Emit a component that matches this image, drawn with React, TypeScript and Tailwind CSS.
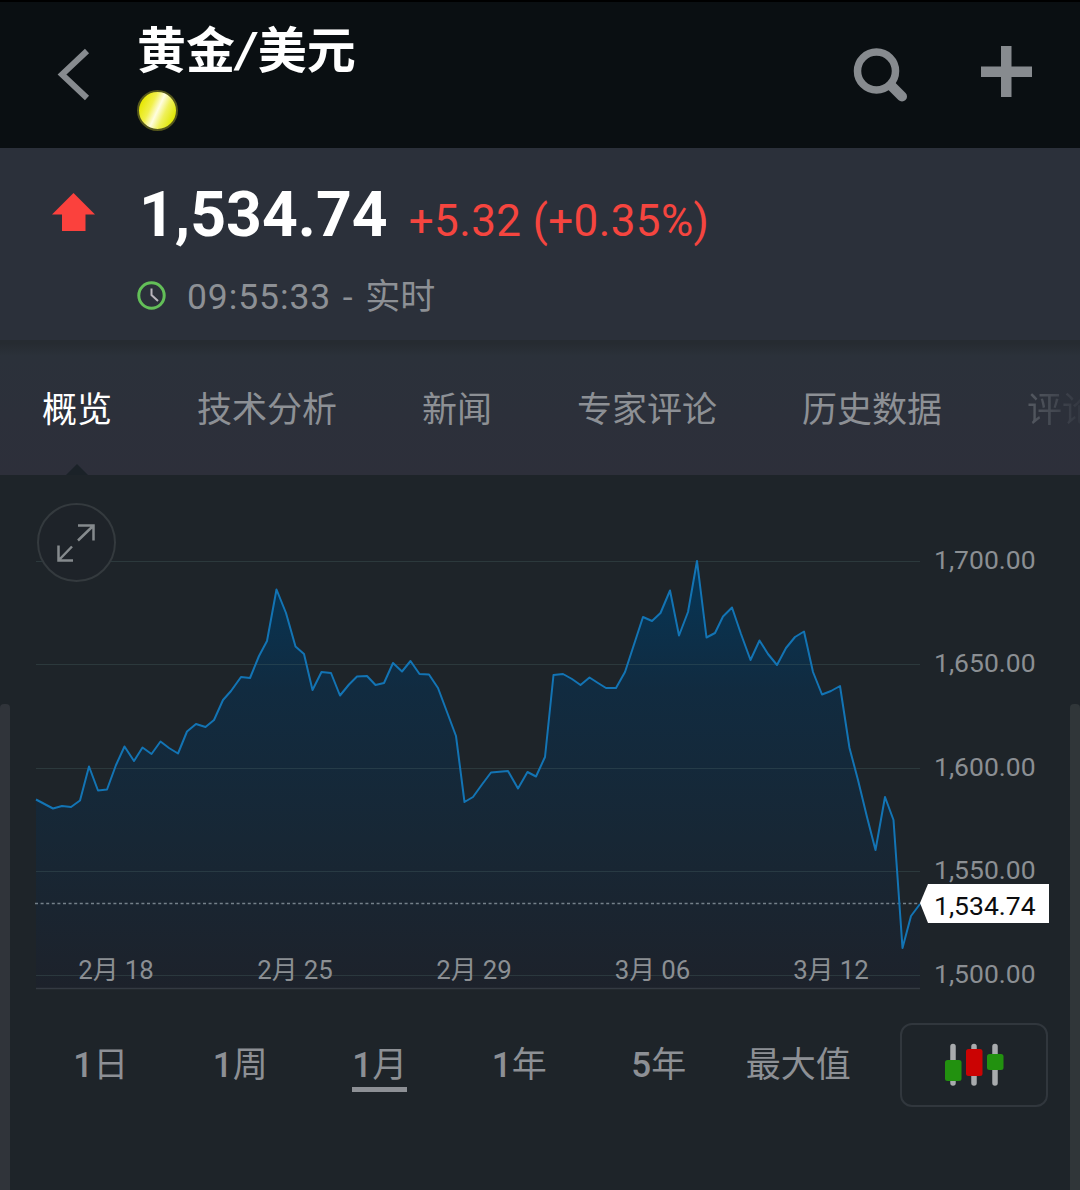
import clsx from "clsx";

const TABS = ["概览", "技术分析", "新闻", "专家评论", "历史数据"];

const PERIODS = [
    { count: "1", unit: "日" },
    { count: "1", unit: "周" },
    { count: "1", unit: "月" },
    { count: "1", unit: "年" },
    { count: "5", unit: "年" },
    { count: "", unit: "最大值" },
];

const PRICE_LEVELS = [
    { label: "1,700.00", y: 86 },
    { label: "1,650.00", y: 189 },
    { label: "1,600.00", y: 293 },
    { label: "1,550.00", y: 396 },
    { label: "1,500.00", y: 500 },
];

const DATES = [
    { label: "2月 18", x: 116 },
    { label: "2月 25", x: 295 },
    { label: "2月 29", x: 474 },
    { label: "3月 06", x: 652.5 },
    { label: "3月 12", x: 831 },
];

const POINTS: [number, number][] = [
    [36, 324.5], [53, 333.5], [62, 331], [71, 332], [80, 325.5], [89, 291.5], [98, 315.5], [107, 314.5],
    [116, 290], [124.5, 271.5], [134, 286], [142.5, 272.5], [151.5, 279], [160.5, 266.5], [169, 273],
    [178, 278.5], [187, 256.5], [196, 249], [205.5, 252], [214, 245], [223, 225], [231, 216], [241, 202],
    [250, 203], [259, 181], [267, 166], [276.5, 114.5], [286, 138], [295.5, 171.5], [304, 179],
    [312.5, 215], [321.5, 197], [331, 198], [340, 220.5], [349, 209.5], [357, 201.5], [367, 201],
    [375.5, 210], [384, 208], [393, 188], [402, 196.5], [410.5, 186], [419.5, 199], [429, 199.5],
    [438, 213], [447, 237], [456, 261], [464.5, 327], [473, 322], [482, 309.5], [491, 297.5], [508, 296],
    [518, 313.5], [527.5, 297], [536, 301.5], [545, 282], [553.5, 200], [563, 199], [572, 204],
    [580.5, 210], [589.5, 202.5], [598, 208], [606, 213], [616, 213], [625, 197], [643, 142],
    [652, 146], [660.5, 138], [670, 115.5], [679, 160.5], [688, 137], [697, 86], [706.5, 162.5],
    [715, 158], [723, 141.5], [732, 132.5], [741, 159], [750.5, 185], [759.5, 165.5], [768, 179],
    [777, 190], [786, 173], [795, 162], [804, 156.5], [813, 197], [822, 219.5], [831, 216], [840, 211],
    [849.5, 273], [858, 305], [867, 342], [875.5, 375], [885, 322], [893.5, 345], [902.5, 473],
    [911, 441], [920, 429],
];

const LINE = POINTS.map(([x, y]) => `${x},${y}`).join(" ");

function Header() {
    return (
        <header className="flex h-[148px] shrink-0 items-start border-t-2 border-black bg-[#0a0f12] text-[#878b8f]">
            <svg className="ml-[57px] mt-[45px] shrink-0" width="34" height="56" viewBox="0 0 34 56" fill="none">
                <path d="M30 4 L5 27.5 L30 51" stroke="currentColor" strokeWidth="6" />
            </svg>
            <div className="ml-[46px] mt-[20px] flex-1">
                <h1 className="text-[49px] leading-[60px] font-bold whitespace-nowrap text-white">
                    黄金<span className="mr-[3px] ml-[2px] italic">/</span>美元
                </h1>
                <div className="mt-[8px] size-[41px] rounded-full border-2 border-[#55571c] bg-[linear-gradient(115deg,#e6e600_12%,#f1f04a_34%,#fffde0_50%,#eff05a_66%,#dfe600_88%)]" />
            </div>
            <svg className="mr-[71px] mt-[44px]" width="56" height="58" viewBox="0 0 56 58" fill="none" stroke="currentColor">
                <circle cx="23.5" cy="25" r="19" strokeWidth="7.5" />
                <path d="M39 40.5 L49 50.5" strokeWidth="10" strokeLinecap="round" />
            </svg>
            <svg className="mr-[48px] mt-[44px]" width="52" height="52" viewBox="0 0 52 52">
                <path d="M21 0h10.500v20.500H52v10.500H31.500V51H21V31H1V20.500h20z" fill="currentColor" />
            </svg>
        </header>
    );
}

function Quote() {
    return (
        <section className="flex h-[192px] shrink-0 bg-[#2b303a]">
            <svg className="ml-[52px] mt-[45px] shrink-0" width="43" height="39" viewBox="0 0 43 39">
                <path d="M21.500 0 L43 21.500 H33.500 V38 H10 V21.500 H0z" fill="#fb413d" />
            </svg>
            <div className="ml-[42px] mt-[29px]">
                <div className="flex items-baseline leading-[76px] whitespace-nowrap">
                    <span className="ml-[2px] text-[62.500px] font-bold text-white">1,534.74</span>
                    <span className="ml-[21px] text-[44px] tracking-[0.4px] text-[#f5453f]">+5.32 (+0.35%)</span>
                </div>
                <div className="mt-[10px] flex items-center whitespace-nowrap text-[#8d9095]">
                    <svg width="29" height="29" viewBox="0 0 29 29" fill="none">
                        <circle cx="14.500" cy="14.500" r="12.700" stroke="#63bf58" strokeWidth="3" />
                        <path d="M14.500 7.500V14L21 20" stroke="#b9b5bd" strokeWidth="2" />
                    </svg>
                    <span className="mt-[4px] ml-[21px] text-[35px] leading-[48px]">
                        <span className="text-[35.5px] tracking-[0.9px] [word-spacing:2px]">09:55:33 - </span>
                        实时
                    </span>
                </div>
            </div>
        </section>
    );
}

function Tabs() {
    return (
        <nav className="relative flex h-[135px] shrink-0 gap-[85px] overflow-hidden bg-linear-to-b from-[#262b31] from-[3px] via-[#2b313a] via-[16px] to-[#2d2f3a] pt-[45px] pl-[42px] text-[35px] leading-[52px] whitespace-nowrap text-[#8d9095]">
            {TABS.map((tab, i) => (
                <span key={tab} className={clsx("shrink-0", i === 0 && "text-white")}>
                    {tab}
                </span>
            ))}
            <span className="shrink-0 bg-linear-to-r from-[#555a62] to-[#30343e] to-[58px] bg-clip-text text-transparent">评论</span>
            <svg className="absolute bottom-0 left-[66px]" width="22" height="11" viewBox="0 0 22 11">
                <path d="M0 11 L11 0 L22 11z" fill="#1b2228" />
            </svg>
        </nav>
    );
}

function Chart() {
    return (
        <div className="relative h-[525px] shrink-0">
            <svg width="1080" height="525" viewBox="0 0 1080 525" fill="none">
                <defs>
                    <linearGradient id="area" x1="0" y1="86" x2="0" y2="513" gradientUnits="userSpaceOnUse">
                        <stop offset="0" stopColor="#053657" />
                        <stop offset="0.3" stopColor="#112b40" />
                        <stop offset="0.65" stopColor="#172735" />
                        <stop offset="1" stopColor="#1d222b" />
                    </linearGradient>
                </defs>
                <polygon points={`36,513 ${LINE} 920,513`} fill="url(#area)" />
                {PRICE_LEVELS.map(({ label, y }) => (
                    <path key={label} d={`M36 ${y + 0.5}H920`} stroke="#4c6668" strokeOpacity="0.32" />
                ))}
                <path d="M36 513.500H920" stroke="#343a42" strokeWidth="1.500" />
                <path d="M35 428.500H922" stroke="#75818a" strokeWidth="1.300" strokeDasharray="3 2.600" />
                <polyline points={LINE} stroke="#1374b4" strokeWidth="2" strokeLinejoin="round" />
                <g fill="#8b8f93">
                    {DATES.map(({ label, x }) => (
                        <text key={label} x={x} y="504" fontSize="25.8" textAnchor="middle">
                            {label}
                        </text>
                    ))}
                    {PRICE_LEVELS.map(({ label, y }) => (
                        <text key={label} x="934" y={y + 8} fontSize="26.5">
                            {label}
                        </text>
                    ))}
                </g>
                <path d="M920 428 L928 409H1049V448H928z" fill="#fff" />
                <text x="934" y="440" fontSize="26.5" fill="#0b0c0e">
                    1,534.74
                </text>
            </svg>
            <button className="absolute top-[28px] left-[37px] flex size-[79px] items-center justify-center rounded-full border-2 border-[#343a3e] bg-[#1e2329]">
                <svg width="40" height="40" viewBox="0 0 40 40" fill="none" stroke="#858a8d" strokeWidth="2.500">
                    <path d="M21 2.500H36.500V17.500M36.500 2.500L21 17.500M1.500 22.500V37.500H16M1.500 37.500L15 23.500" />
                </svg>
            </button>
        </div>
    );
}

function Periods() {
    return (
        <div className="flex shrink-0 pl-[31px] text-[35px] leading-[52px] text-[#8d9095]">
            <div className="grid w-[837px] grid-cols-6 pt-[40px]">
                {PERIODS.map(({ count, unit }, i) => (
                    <div key={count + unit} className="flex justify-center whitespace-nowrap">
                        <span className={clsx("h-[52px]", i === 2 && "border-b-[5px] border-[#8d9095]")}>
                            <span className="font-medium">{count}</span>
                            {unit}
                        </span>
                    </div>
                ))}
            </div>
            <button className="mt-[23px] ml-[32px] flex h-[84px] w-[148px] items-center justify-center rounded-[12px] border-2 border-[#31373d]">
                <svg width="60" height="44" viewBox="0 0 60 44">
                    <g stroke="#a8abad" strokeWidth="5.500" strokeLinecap="round">
                        <path d="M9 3.500V40M30 3.500V40M51 3.500V40" />
                    </g>
                    <rect x="1" y="17" width="16.500" height="21" rx="2.500" fill="#22910f" />
                    <rect x="22" y="6" width="16.500" height="27" rx="2.500" fill="#cb0303" />
                    <rect x="43" y="11" width="16.500" height="16" rx="2.500" fill="#22910f" />
                </svg>
            </button>
        </div>
    );
}

export default function App() {
    return (
        <div className="relative flex h-[1190px] w-[1080px] flex-col overflow-hidden bg-[#1e2429] font-[Roboto,'Noto_Sans_CJK_SC',sans-serif]">
            <Header />
            <Quote />
            <Tabs />
            <Chart />
            <Periods />
            <div className="absolute top-[704px] bottom-0 left-0 w-[10px] rounded-t-[4px] bg-[#30343a]" />
            <div className="absolute top-[704px] right-0 bottom-0 w-[10px] rounded-t-[4px] bg-[#303639]" />
        </div>
    );
}
